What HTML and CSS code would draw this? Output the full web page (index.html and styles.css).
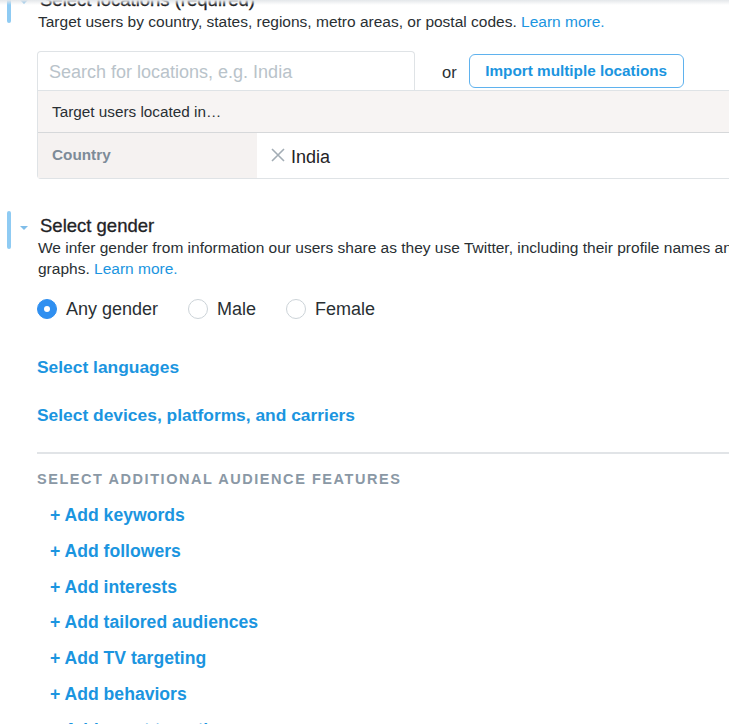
FILE: index.html
```html
<!DOCTYPE html>
<html>
<head>
<meta charset="utf-8">
<link rel="stylesheet" href="styles.css">
</head>
<body>
<div class="topshade"></div>
<div class="page">
  <section class="section section-loc">
    <div class="gutter"><span class="bar"></span><span class="caret"></span></div>
    <div class="content">
      <h2 class="heading">Select locations (required)</h2>
      <p class="desc">Target users by country, states, regions, metro areas, or postal codes. <a class="link">Learn more.</a></p>
      <div class="locbox">
        <div class="searchrow">
          <div class="search">Search for locations, e.g. India</div>
          <span class="or">or</span>
          <button class="import">Import multiple locations</button>
        </div>
        <div class="table">
          <div class="trow head">Target users located in…</div>
          <div class="trow body">
            <div class="cell-type">Country</div>
            <div class="cell-val">
              <svg class="x" width="16" height="16" viewBox="0 0 16 16"><path d="M2 2L14 14M14 2L2 14" stroke="#a3adb5" stroke-width="1.6" fill="none"/></svg>
              <span class="val">India</span>
            </div>
          </div>
        </div>
      </div>
    </div>
  </section>

  <section class="section section-gender">
    <div class="gutter"><span class="bar"></span><span class="caret"></span></div>
    <div class="content">
      <h2 class="heading">Select gender</h2>
      <p class="desc">We infer gender from information our users share as they use Twitter, including their profile names and<br>graphs. <a class="link">Learn more.</a></p>
      <div class="radios">
        <label class="radio"><span class="dot on"></span>Any gender</label>
        <label class="radio"><span class="dot"></span>Male</label>
        <label class="radio"><span class="dot"></span>Female</label>
      </div>
    </div>
  </section>

  <div class="more">
    <a class="biglink first">Select languages</a>
    <a class="biglink second">Select devices, platforms, and carriers</a>
    <div class="divider"></div>
    <div class="subhead">SELECT ADDITIONAL AUDIENCE FEATURES</div>
    <ul class="adds">
      <li>+ Add keywords</li>
      <li>+ Add followers</li>
      <li>+ Add interests</li>
      <li>+ Add tailored audiences</li>
      <li>+ Add TV targeting</li>
      <li>+ Add behaviors</li>
      <li>+ Add event targeting</li>
    </ul>
  </div>
</div>
</body>
</html>
```

FILE: styles.css
```css
html, body {
  margin: 0;
  padding: 0;
  overflow: hidden;
  background: #fff;
}
body {
  font-family: "Liberation Sans", Arial, Helvetica, sans-serif;
  color: #292f33;
  width: 729px;
  height: 724px;
  position: relative;
}
.topshade {
  position: absolute;
  left: 0;
  top: 0;
  width: 100%;
  height: 5px;
  background: linear-gradient(#e4e7ea, rgba(255,255,255,0));
  z-index: 2;
}
.page {
  width: 820px;
}
.section {
  display: grid;
  grid-template-columns: 38px 1fr;
}
.section-loc {
  margin-top: -11px;
}
.section-gender {
  margin-top: 36px;
}
.gutter {
  display: flex;
  align-items: flex-start;
}
.bar {
  width: 4px;
  height: 38px;
  margin-left: 7px;
  margin-top: -4px;
  border-radius: 2px;
  background: #8fcbf3;
}
.caret {
  width: 0;
  height: 0;
  margin-left: 9px;
  margin-top: 11px;
  border-left: 4px solid transparent;
  border-right: 4px solid transparent;
  border-top: 4px solid #7fbde9;
}
.heading {
  margin: 0 0 0 2px;
  font-size: 18.5px;
  line-height: 22px;
  font-weight: normal;
  color: #1f2326;
  -webkit-text-stroke: 0.3px #1f2326;
}
.desc {
  margin: 0;
  font-size: 15.5px;
  line-height: 21px;
  color: #292f33;
}
.link {
  color: #1b95e0;
}
.locbox {
  margin-top: 19px;
  margin-left: -1px;
}
.searchrow {
  display: flex;
  align-items: flex-end;
}
.search {
  width: 365px;
  height: 38px;
  border: 1px solid #dfe3e6;
  border-bottom: none;
  border-radius: 4px 4px 0 0;
  padding-left: 11px;
  font-size: 18px;
  line-height: 40px;
  color: #b9c3ca;
}
.or {
  margin-left: 27px;
  font-size: 16.5px;
  line-height: 20px;
  align-self: center;
  margin-top: 2px;
  color: #292f33;
}
.import {
  margin-left: 12px;
  align-self: flex-start;
  margin-top: 3px;
  width: 215px;
  height: 34px;
  border: 1px solid #5fb2ee;
  border-radius: 6px;
  background: #fff;
  color: #1b95e0;
  font-family: "Liberation Sans", Arial, sans-serif;
  font-weight: bold;
  font-size: 15.3px;
  padding: 0;
}
.table {
  border: 1px solid #dfe3e6;
  border-right: none;
  border-radius: 0 0 0 4px;
}
.trow.head {
  height: 41px;
  line-height: 41px;
  padding-left: 14px;
  background: #f7f4f3;
  font-size: 15.3px;
  color: #292f33;
  border-bottom: 1px solid #d6d8da;
}
.trow.body {
  display: flex;
  height: 45px;
}
.cell-type {
  width: 205px;
  padding-left: 14px;
  background: #f5f2f1;
  font-size: 15.3px;
  font-weight: bold;
  color: #7d8b98;
  line-height: 43px;
}
.cell-val {
  display: flex;
  align-items: center;
  padding-left: 13px;
  margin-top: -2px;
}
.x {
  display: block;
}
.val {
  margin-left: 5px;
  font-size: 18px;
  color: #1f2326;
  margin-top: 5px;
}
.radios {
  display: flex;
  margin-top: 19px;
  margin-left: -1px;
  height: 22px;
  align-items: center;
}
.radio {
  display: flex;
  align-items: center;
  font-size: 18px;
  color: #292f33;
  margin-right: 30px;
}
.dot {
  width: 18px;
  height: 18px;
  border: 1px solid #ccd3d8;
  border-radius: 50%;
  margin-right: 9px;
  box-sizing: content-box;
  position: relative;
  background: #fff;
}
.dot.on {
  background: #2f8ff0;
  border-color: #2f8ff0;
}
.dot.on::after {
  content: "";
  position: absolute;
  left: 6px;
  top: 6px;
  width: 6px;
  height: 6px;
  border-radius: 50%;
  background: #fff;
}
.more {
  padding-left: 37px;
}
.biglink {
  display: block;
  font-size: 17.4px;
  line-height: 22px;
  font-weight: bold;
  color: #1b95e0;
}
.biglink.first {
  margin-top: 36px;
}
.biglink.second {
  margin-top: 26px;
}
.divider {
  margin-top: 26px;
  height: 2px;
  background: #e1e4e7;
}
.subhead {
  margin-top: 15px;
  font-size: 14.5px;
  line-height: 20px;
  font-weight: bold;
  letter-spacing: 1.55px;
  color: #8a98a5;
}
.adds {
  list-style: none;
  margin: 9px 0 0 13px;
  padding: 0;
}
.adds li {
  font-size: 17.6px;
  line-height: 35.8px;
  font-weight: bold;
  color: #1b95e0;
}
```
